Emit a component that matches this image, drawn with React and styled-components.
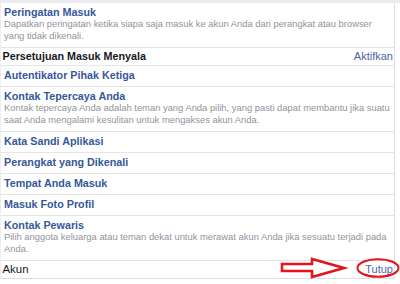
import React from 'react'
import styled, { createGlobalStyle } from 'styled-components'

const GlobalStyle = createGlobalStyle`
    body {
        margin: 0;
        background: #ffffff;
        font-family: "Liberation Sans", Arial, sans-serif;
    }
`

const Page = styled.div`
    position: relative;
    width: 400px;
    height: 284px;
    overflow: hidden;
`

const TopBand = styled.div`
    height: 3px;
    background-color: #e9ebee;
`

const Panel = styled.div`
    width: 395px;
    box-sizing: border-box;
    border-left: 1px solid #eceef1;
    border-right: 1px solid #dddfe2;
    border-bottom: 1px solid #dddfe2;
`

const Item = styled.div`
    padding: 3px 2px 5px 3px;
    border-bottom: 1px solid #e5e5e5;
`

const Title = styled.div`
    font-size: 10.75px;
    font-weight: bold;
    line-height: 12px;
    color: #365899;
    white-space: nowrap;
`

const Desc = styled.div`
    font-size: 9.4px;
    line-height: 12px;
    color: #90949c;
    white-space: nowrap;
`

const Header = styled.div`
    display: flex;
    justify-content: space-between;
    align-items: center;
    padding: 2px 1px 3px 1.5px;
    border-bottom: ${(props) => props.last ? 'none' : '1px solid #e5e5e5'};
    line-height: 12px;
`

const HeaderText = styled.span`
    font-size: ${(props) => props.light ? '11.4px' : '10.75px'};
    font-weight: ${(props) => props.light ? 'normal' : 'bold'};
    color: #141823;
`

const Link = styled.span`
    font-size: 11px;
    color: #4c66a4;
`

const Marks = styled.svg`
    position: absolute;
    top: 0;
    left: 0;
    pointer-events: none;
`

const items = [
    {
        title: 'Peringatan Masuk',
        desc: [
            'Dapatkan peringatan ketika siapa saja masuk ke akun Anda dari perangkat atau browser',
            'yang tidak dikenali.'
        ]
    },
    { header: 'Persetujuan Masuk Menyala', link: 'Aktifkan' },
    { title: 'Autentikator Pihak Ketiga' },
    {
        title: 'Kontak Tepercaya Anda',
        desc: [
            'Kontak tepercaya Anda adalah teman yang Anda pilih, yang pasti dapat membantu jika suatu',
            'saat Anda mengalami kesulitan untuk mengakses akun Anda.'
        ]
    },
    { title: 'Kata Sandi Aplikasi' },
    { title: 'Perangkat yang Dikenali' },
    { title: 'Tempat Anda Masuk' },
    { title: 'Masuk Foto Profil' },
    {
        title: 'Kontak Pewaris',
        desc: [
            'Pilih anggota keluarga atau teman dekat untuk merawat akun Anda jika sesuatu terjadi pada',
            'Anda.'
        ]
    }
]

const App = () => {
    return (
        <Page>
            <GlobalStyle />
            <TopBand />
            <Panel>
                {items.map((item, i) =>
                    item.header ? (
                        <Header key={i}>
                            <HeaderText>{item.header}</HeaderText>
                            <Link>{item.link}</Link>
                        </Header>
                    ) : (
                        <Item key={i}>
                            <Title>{item.title}</Title>
                            {item.desc && item.desc.map((line, j) => <Desc key={j}>{line}</Desc>)}
                        </Item>
                    )
                )}
                <Header last>
                    <HeaderText light>Akun</HeaderText>
                    <Link>Tutup</Link>
                </Header>
            </Panel>

            {/* red annotation drawn over the page */}
            <Marks width="400" height="284" viewBox="0 0 400 284">
                <polygon
                    points="282,264 312,264 312,259 344,268 312,277 312,271 282,271"
                    fill="#ffffff"
                    stroke="#e3141b"
                    strokeWidth="2.6"
                    strokeLinejoin="miter"
                />
                <ellipse cx="378" cy="268" rx="20.5" ry="8.8" fill="none" stroke="#e3141b" strokeWidth="2" />
            </Marks>
        </Page>
    )
}

export default App
